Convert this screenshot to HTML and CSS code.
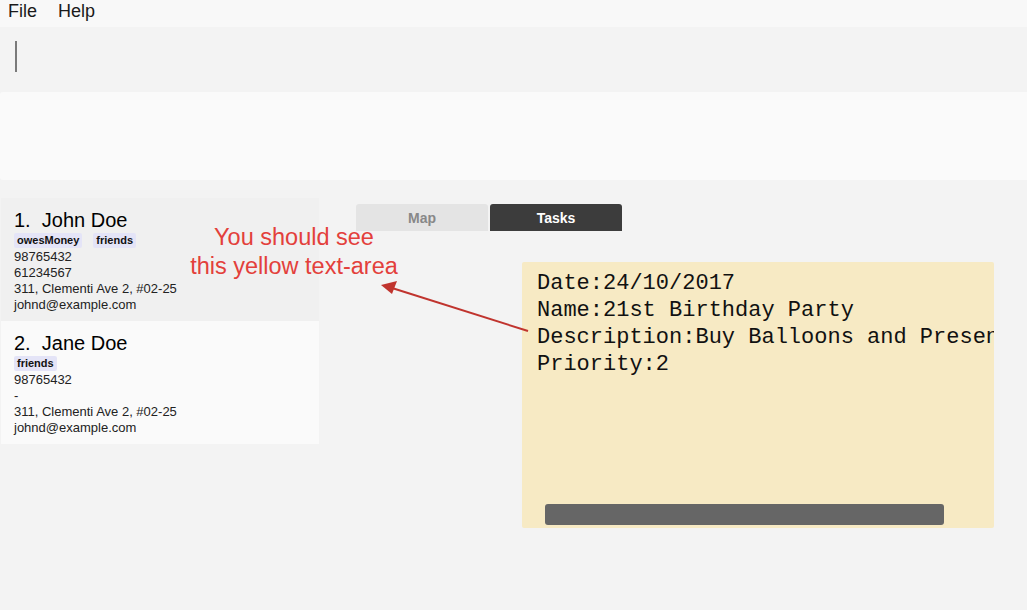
FILE: index.html
```html
<!DOCTYPE html>
<html>
<head>
<meta charset="utf-8">
<link rel="stylesheet" href="styles.css">
</head>
<body>
<div class="app">
  <div class="menubar">
    <span class="menu-item">File</span>
    <span class="menu-item">Help</span>
  </div>
  <div class="command"><div class="cursor"></div></div>
  <div class="result"></div>
  <div class="main">
    <div class="person-list">
      <div class="card card-selected">
        <div class="name">1.&nbsp;&nbsp;John Doe</div>
        <div class="tags"><span class="tag">owesMoney</span><span class="tag">friends</span></div>
        <div class="line">98765432</div>
        <div class="line">61234567</div>
        <div class="line">311, Clementi Ave 2, #02-25</div>
        <div class="line">johnd@example.com</div>
      </div>
      <div class="card">
        <div class="name">2.&nbsp;&nbsp;Jane Doe</div>
        <div class="tags"><span class="tag">friends</span></div>
        <div class="line">98765432</div>
        <div class="line">-</div>
        <div class="line">311, Clementi Ave 2, #02-25</div>
        <div class="line">johnd@example.com</div>
      </div>
    </div>
    <div class="right">
      <div class="tabs">
        <div class="tab">Map</div>
        <div class="tab tab-active">Tasks</div>
      </div>
      <div class="textarea">
        <div class="ta-text">Date:24/10/2017
Name:21st Birthday Party
Description:Buy Balloons and Presents
Priority:2</div>
        <div class="hscroll"></div>
      </div>
    </div>
  </div>
  <div class="annotation">
    <div class="note">You should see<br>this yellow text-area</div>
    <svg class="arrow" width="1027" height="610" viewBox="0 0 1027 610">
      <line x1="528" y1="331" x2="392" y2="288" stroke="#c0342e" stroke-width="2"/>
      <polygon points="381,285 397,281 392,294" fill="#c0342e"/>
    </svg>
  </div>
</div>
</body>
</html>
```

FILE: styles.css
```css
html, body {
  margin: 0;
  padding: 0;
}
body {
  background: #f3f3f3;
  font-family: "Liberation Sans", Arial, sans-serif;
  width: 1027px;
  height: 610px;
  overflow: hidden;
}
.app {
  position: relative;
  height: 610px;
}
.menubar {
  height: 27px;
  background: #f8f8f8;
  display: flex;
  align-items: center;
  padding-left: 8px;
  gap: 21px;
  box-sizing: border-box;
}
.menu-item {
  font-size: 18px;
  color: #1a1a1a;
  line-height: 22px;
  margin-top: -5px;
}
.command {
  height: 65px;
  background: #f3f3f3;
  padding: 14px 0 0 15px;
  box-sizing: border-box;
}
.cursor {
  width: 2px;
  height: 31px;
  background: #7a7a7a;
}
.result {
  height: 88px;
  background: #fafafa;
  border-radius: 3px 0 0 3px;
}
.main {
  display: flex;
  padding-top: 18px;
}
.person-list {
  width: 318px;
  margin-left: 1px;
  display: flex;
  flex-direction: column;
}
.card {
  height: 123px;
  background: #fafafa;
  padding: 11px 0 0 13px;
  box-sizing: border-box;
}
.card-selected {
  background: #f0f0f0;
}
.name {
  font-size: 20px;
  line-height: 23px;
  color: #000;
}
.tags {
  display: flex;
  gap: 11px;
  margin-top: 1px;
  margin-bottom: 1px;
}
.tag {
  background: #e4e4f7;
  font-size: 11px;
  font-weight: bold;
  color: #111;
  line-height: 15px;
  padding: 0 3px;
  border-radius: 2px;
}
.line {
  font-size: 13px;
  line-height: 16px;
  color: #222;
}
.right {
  flex: 1;
  display: flex;
  flex-direction: column;
}
.tabs {
  display: flex;
  gap: 2px;
  padding-left: 37px;
  margin-top: 6px;
}
.tab {
  width: 132px;
  height: 27px;
  background: #e4e4e4;
  color: #888;
  font-size: 14px;
  font-weight: bold;
  display: flex;
  align-items: center;
  justify-content: center;
  border-radius: 3px 3px 0 0;
}
.tab-active {
  background: #3c3c3c;
  color: #fff;
}
.textarea {
  margin-top: 31px;
  margin-left: 203px;
  width: 472px;
  height: 266px;
  background: #f7eac4;
  border-radius: 2px;
  display: flex;
  flex-direction: column;
  box-sizing: border-box;
  padding-bottom: 3px;
}
.ta-text {
  flex: 1;
  overflow: hidden;
  white-space: pre;
  font-family: "Liberation Mono", "Courier New", monospace;
  font-size: 22px;
  line-height: 27px;
  color: #111;
  padding: 8px 0 0 15px;
}
.hscroll {
  margin-left: 23px;
  width: 399px;
  height: 21px;
  background: #666;
  border-radius: 3px;
}
.annotation {
  position: absolute;
  left: 0;
  top: 0;
  width: 1027px;
  height: 610px;
  pointer-events: none;
}
.note {
  position: absolute;
  left: 176px;
  top: 223px;
  width: 236px;
  text-align: center;
  font-size: 23.5px;
  line-height: 29px;
  color: #e3403b;
}
.arrow {
  position: absolute;
  left: 0;
  top: 0;
}
```
